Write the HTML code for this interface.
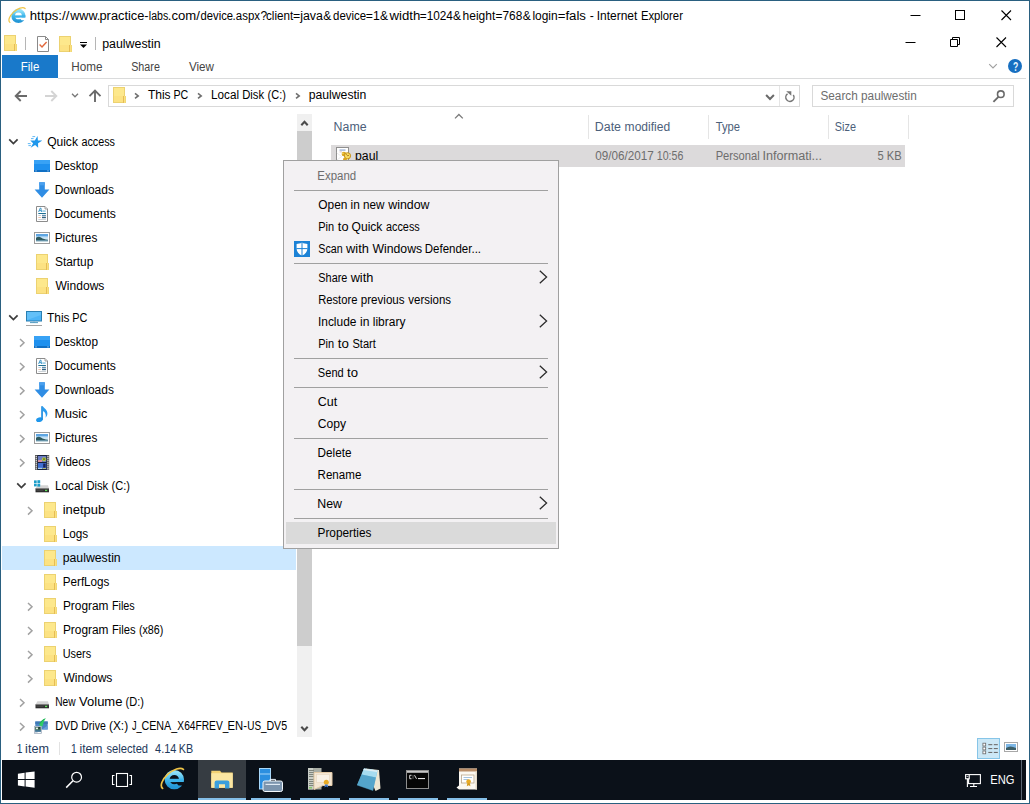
<!DOCTYPE html>
<html lang="en"><head><meta charset="utf-8"><title>paulwestin - File Explorer</title>
<style>
html,body{margin:0;padding:0;}
body{width:1030px;height:804px;overflow:hidden;background:#fff;font-family:"Liberation Sans", sans-serif;font-size:12px;position:relative;}
#root{position:absolute;left:0;top:0;width:1030px;height:804px;overflow:hidden;background:#fff;}
.r{position:absolute;display:block;}
.t{position:absolute;white-space:pre;line-height:16px;height:16px;font-size:12px;transform-origin:0 0;}
.s{display:inline-block;white-space:pre;transform-origin:0 0;height:16px;vertical-align:top;}
</style></head><body><div id="root">
<div class="r" style="left:0px;top:0px;width:1030px;height:804px;background:#2a6080;"></div>
<div class="r" style="left:1px;top:1px;width:1028px;height:802px;background:#fff;"></div>
<span class="t" style="left:30px;top:8.00px;color:#000;"><span id="t0" class="s" style="width:39.50px;transform:translateX(-0.20px) scaleX(1.0963);">https://</span><span id="t1" class="s" style="width:30.00px;transform:translateX(0.25px) scaleX(1.0463);">www.</span><span id="t2" class="s" style="width:49.10px;transform:translateX(-0.50px) scaleX(1.0670);">practice-</span><span id="t3" class="s" style="width:19.40px;transform:translateX(-0.15px) scaleX(0.8812);">labs</span><span id="t4" class="s" style="width:32.10px;transform:translateX(-0.25px) scaleX(1.0939);">.com/</span><span id="t5" class="s" style="width:32.50px;transform:translateX(0.60px) scaleX(0.9369);">device</span><span id="t6" class="s" style="width:27.40px;transform:translateX(-0.40px) scaleX(0.9551);">.aspx</span><span id="t7" class="s" style="width:5.50px;transform:translateX(0.50px) scaleX(1.0000);">?</span><span id="t8" class="s" style="width:27.20px;transform:translateX(1.00px) scaleX(0.9709);">client</span><span id="t9" class="s" style="width:29.90px;transform:translateX(-0.05px) scaleX(1.0299);">=java</span><span id="t10" class="s" style="width:10.00px;transform:translateX(0.60px) scaleX(1.0000);">&amp;</span><span id="t11" class="s" style="width:33.00px;transform:translateX(0.10px) scaleX(0.9514);">device</span><span id="t12" class="s" style="width:13.90px;transform:translateX(-0.15px) scaleX(1.0155);">=1</span><span id="t13" class="s" style="width:9.20px;transform:translateX(0.50px) scaleX(1.0000);">&amp;</span><span id="t14" class="s" style="width:30.80px;transform:translateX(0.45px) scaleX(1.0994);">width</span><span id="t15" class="s" style="width:33.10px;transform:translateX(0.75px) scaleX(0.9821);">=1024</span><span id="t16" class="s" style="width:10.00px;transform:translateX(0.60px) scaleX(1.0000);">&amp;</span><span id="t17" class="s" style="width:32.70px;transform:translateX(-0.40px) scaleX(0.9999);">height</span><span id="t18" class="s" style="width:26.70px;transform:translateX(0.55px) scaleX(0.9877);">=768</span><span id="t19" class="s" style="width:10.20px;transform:translateX(0.75px) scaleX(1.0000);">&amp;</span><span id="t20" class="s" style="width:25.20px;transform:translateX(0.45px) scaleX(0.9937);">login</span><span id="t21" class="s" style="width:32.00px;transform:translateX(0.65px) scaleX(1.1029);">=fals </span><span id="t22" class="s" style="width:7.50px;transform:translateX(0.65px) scaleX(1.0213);">- </span><span id="t23" class="s" style="width:44.00px;transform:translateX(-0.35px) scaleX(0.9993);">Internet </span><span id="t24" class="s" style="transform:translateX(-0.10px) scaleX(0.9395);">Explorer</span></span>
<svg class="r" style="left:7.5px;top:5.5px" width="19" height="19" viewBox="0 0 26 26"><defs><linearGradient id="g1" x1="0" y1="0" x2="0" y2="1"><stop offset="0" stop-color="#8fe0f8"/><stop offset="0.55" stop-color="#3db4ea"/><stop offset="1" stop-color="#2497d6"/></linearGradient></defs><circle cx="14.3" cy="13.6" r="7.200" fill="none" stroke="url(#g1)" stroke-width="5"/><rect x="9" y="12.800" width="14.600" height="3.300" fill="#3db4ea"/><path d="M15.500 16.100h10v3.300h-7z" fill="#fff"/><path d="M2.600 22.400A13.500 6.600 -40 0 1 23.400 3.400" fill="none" stroke="#f0c548" stroke-width="1.700" stroke-linecap="round"/></svg>
<svg class="r" style="left:905px;top:5px" width="110" height="22" viewBox="0 0 110 22"><path d="M5.5 10.5h10" stroke="#000" stroke-width="1" fill="none"/><rect x="50.5" y="5.5" width="9" height="9" stroke="#000" stroke-width="1" fill="none"/><path d="M96.500 5.500l9.500 9.500M106 5.500l-9.500 9.500" stroke="#000" stroke-width="1.100" fill="none"/></svg>
<svg class="r" style="left:2px;top:35px" width="16" height="16" viewBox="0 0 16 16"><rect x="2" y="0" width="12" height="16" fill="#fde88c"/><rect x="2.5" y="0.5" width="11" height="15" fill="none" stroke="#ecd271" stroke-width="1"/><rect x="3" y="9" width="10" height="6" fill="#fce283" /><rect x="12" y="9" width="3" height="7" fill="#fbe080"/><rect x="12" y="9" width="1" height="7" fill="#e6bd55"/><rect x="14.4" y="9" width="0.6" height="7" fill="#ecd271"/></svg>
<div class="r" style="left:25px;top:37px;width:1px;height:13px;background:#b5b5b5;"></div>
<svg class="r" style="left:36px;top:36px" width="14" height="16" viewBox="0 0 14 16"><path d="M1.5 0.5h8l3 3v12h-11z" fill="#fff" stroke="#8a8a8a" stroke-width="1"/><path d="M9.5 0.5v3h3" fill="none" stroke="#8a8a8a" stroke-width="1"/><path d="M3.6 8.6l2.4 2.4 4.6-5" fill="none" stroke="#e2683c" stroke-width="1.4"/></svg>
<svg class="r" style="left:57px;top:36px" width="16" height="16" viewBox="0 0 16 16"><rect x="2" y="0" width="12" height="16" fill="#fde88c"/><rect x="2.5" y="0.5" width="11" height="15" fill="none" stroke="#ecd271" stroke-width="1"/><rect x="3" y="9" width="10" height="6" fill="#fce283" /><rect x="12" y="9" width="3" height="7" fill="#fbe080"/><rect x="12" y="9" width="1" height="7" fill="#e6bd55"/><rect x="14.4" y="9" width="0.6" height="7" fill="#ecd271"/></svg>
<svg class="r" style="left:79px;top:41px" width="10" height="8" viewBox="0 0 10 8"><rect x="1" y="1" width="7" height="1" fill="#000"/><path d="M1 3.6h7l-3.500 3.5z" fill="#000"/></svg>
<div class="r" style="left:95px;top:37px;width:1px;height:13px;background:#b5b5b5;"></div>
<span id="t25" class="t" style="left:102px;top:36.00px;color:#000;transform:translateX(0.20px) scaleX(1.0315);">paulwestin</span>
<svg class="r" style="left:900px;top:32px" width="110" height="22" viewBox="0 0 110 22"><path d="M5.5 10.5h10" stroke="#000" stroke-width="1" fill="none"/><path d="M50.5 7.5h7v7h-7z M52.500 7.5v-2h7v7h-2" stroke="#000" stroke-width="1" fill="none"/><path d="M96.500 5.500l9.500 9.500M106 5.500l-9.500 9.500" stroke="#000" stroke-width="1.100" fill="none"/></svg>
<div class="r" style="left:2px;top:55px;width:56px;height:23px;background:#1979ca;"></div>
<span id="t26" class="t" style="left:20px;top:59.00px;color:#fff;transform:translateX(0.80px) scaleX(0.9557);">File</span>
<span id="t27" class="t" style="left:71px;top:59.00px;color:#444;transform:translateX(0.20px) scaleX(0.9756);">Home</span>
<span id="t28" class="t" style="left:131px;top:59.00px;color:#444;transform:translateX(0.20px) scaleX(0.8952);">Share</span>
<span id="t29" class="t" style="left:188px;top:59.00px;color:#444;transform:translateX(0.95px) scaleX(0.9709);">View</span>
<div class="r" style="left:58px;top:78px;width:968px;height:1px;background:#dadbdc;"></div>
<svg class="r" style="left:988px;top:62px" width="12" height="8" viewBox="0 0 12 8"><path d="M1.200 2.200l3.800 3.800 3.800-3.800" fill="none" stroke="#a0a0a0" stroke-width="1.150"/></svg>
<svg class="r" style="left:1007px;top:58px" width="16" height="16" viewBox="0 0 16 16"><circle cx="8" cy="8" r="7" fill="#176fc1"/></svg>
<span class="t" style="left:1012.700px;top:58.500px;color:#eaf6ff;font-weight:bold;transform:scaleX(0.720);">?</span>
<svg class="r" style="left:14px;top:90px" width="14" height="12" viewBox="0 0 14 12"><path d="M13 6H2.200M6.700 1L1.700 6l5 5" fill="none" stroke="#6a6a6a" stroke-width="1.900"/></svg>
<svg class="r" style="left:44px;top:90px" width="14" height="12" viewBox="0 0 14 12"><path d="M1 6h10.800M7.300 1l5 5-5 5" fill="none" stroke="#d4d4d4" stroke-width="1.900"/></svg>
<svg class="r" style="left:71px;top:93px" width="8" height="5" viewBox="0 0 8 5"><path d="M1 0.800l3 3 3-3" fill="none" stroke="#777" stroke-width="1.300"/></svg>
<svg class="r" style="left:88px;top:89px" width="14" height="14" viewBox="0 0 14 14"><path d="M7 13V2.200M1.500 7.200l5.500-5.500 5.500 5.500" fill="none" stroke="#6a6a6a" stroke-width="1.900"/></svg>
<div class="r" style="left:108px;top:85px;width:692px;height:22px;background:#d9d9d9;"></div>
<div class="r" style="left:109px;top:86px;width:690px;height:20px;background:#fff;"></div>
<svg class="r" style="left:111px;top:87px" width="16" height="16" viewBox="0 0 16 16"><rect x="2" y="0" width="12" height="16" fill="#fde88c"/><rect x="2.5" y="0.5" width="11" height="15" fill="none" stroke="#ecd271" stroke-width="1"/><rect x="3" y="9" width="10" height="6" fill="#fce283" /><rect x="12" y="9" width="3" height="7" fill="#fbe080"/><rect x="12" y="9" width="1" height="7" fill="#e6bd55"/><rect x="14.4" y="9" width="0.6" height="7" fill="#ecd271"/></svg>
<svg class="r" style="left:133.8px;top:91.5px" width="6" height="8" viewBox="0 0 6 8"><path d="M1 1.400l3.200 2.500-3.200 2.500" fill="none" stroke="#6e6e6e" stroke-width="1.600"/></svg>
<span class="t" style="left:148px;top:87.00px;color:#000;"><span id="t30" class="s" style="width:26.10px;transform:translateX(-0.10px) scaleX(1.0032);">This </span><span id="t31" class="s" style="transform:translateX(-0.60px) scaleX(0.8855);">PC</span></span>
<svg class="r" style="left:196.7px;top:91.5px" width="6" height="8" viewBox="0 0 6 8"><path d="M1 1.400l3.200 2.500-3.200 2.500" fill="none" stroke="#6e6e6e" stroke-width="1.600"/></svg>
<span class="t" style="left:211px;top:87.00px;color:#000;"><span id="t32" class="s" style="width:31.20px;transform:translateX(0.05px) scaleX(0.9740);">Local </span><span id="t33" class="s" style="width:25.10px;transform:translateX(0.20px) scaleX(0.9411);">Disk </span><span id="t34" class="s" style="transform:translateX(0.55px) scaleX(0.9165);">(C:)</span></span>
<svg class="r" style="left:295px;top:91.5px" width="6" height="8" viewBox="0 0 6 8"><path d="M1 1.400l3.200 2.500-3.200 2.500" fill="none" stroke="#6e6e6e" stroke-width="1.600"/></svg>
<span id="t35" class="t" style="left:308px;top:87.00px;color:#000;transform:translateX(0.70px) scaleX(1.0171);">paulwestin</span>
<svg class="r" style="left:765px;top:93px" width="11" height="8" viewBox="0 0 11 8"><path d="M1.100 2l3.900 4 3.900-4" fill="none" stroke="#6a6a6a" stroke-width="2"/></svg>
<div class="r" style="left:779px;top:86px;width:1px;height:20px;background:#e5e5e5;"></div>
<svg class="r" style="left:783px;top:90px" width="14" height="14" viewBox="0 0 14 14"><path d="M4.550 3.940A4.100 4.100 0 1 0 10.260 4.950" fill="none" stroke="#777" stroke-width="1.500"/><path d="M3.200 1.300H8.300V5.800z" fill="#777"/></svg>
<div class="r" style="left:812px;top:85px;width:202px;height:22px;background:#d9d9d9;"></div>
<div class="r" style="left:813px;top:86px;width:200px;height:20px;background:#fff;"></div>
<span id="t36" class="t" style="left:820px;top:88.00px;color:#6d6d6d;transform:translateX(0.45px) scaleX(0.9819);">Search paulwestin</span>
<svg class="r" style="left:992px;top:89px" width="14" height="14" viewBox="0 0 14 14"><circle cx="8.800" cy="5.200" r="3.300" fill="none" stroke="#6a6a6a" stroke-width="1.600"/><path d="M6.400 7.800L1.400 12.800" stroke="#6a6a6a" stroke-width="1.900"/></svg>
<div class="r" style="left:2px;top:546px;width:294px;height:24px;background:#cce8ff;"></div>
<svg class="r" style="left:8.3px;top:138px" width="11" height="8" viewBox="0 0 11 8"><path d="M1.200 1.400l4.200 4.200 4.200-4.200" fill="none" stroke="#3c3c3c" stroke-width="1.700"/></svg>
<svg class="r" style="left:26px;top:134px" width="16" height="16" viewBox="0 0 16 16"><polygon points="11.53,2.10 11.90,6.40 16.42,6.52 12.06,9.30 12.16,13.68 9.10,11.10 4.64,13.68 7.11,9.30 4.25,6.52 8.84,6.40" fill="#1f97ec"/><path d="M6.400 2.600h2.800M5 4.600h2.600M1.800 9.600h2.800M2.400 11.600h2.600" stroke="#4fb0f4" stroke-width="0.900" fill="none"/></svg>
<span class="t" style="left:47px;top:134.00px;color:#000;"><span id="t37" class="s" style="width:34.10px;transform:translateX(0.15px) scaleX(1.0025);">Quick </span><span id="t38" class="s" style="transform:translateX(0.40px) scaleX(0.8999);">access</span></span>
<svg class="r" style="left:34px;top:158px" width="16" height="16" viewBox="0 0 16 16"><rect x="0" y="2" width="16" height="12" fill="#1e90ee"/><rect x="0" y="2" width="16" height="4" fill="#38a2f5"/><rect x="0" y="12" width="16" height="2" fill="#0f6fc4"/><rect x="1.5" y="12.4" width="1" height="1" fill="#cfe8ff"/><rect x="13.5" y="12.4" width="1" height="1" fill="#cfe8ff"/></svg>
<span id="t39" class="t" style="left:54px;top:158.00px;color:#000;transform:translateX(0.70px) scaleX(0.9825);">Desktop</span>
<svg class="r" style="left:34px;top:182px" width="16" height="16" viewBox="0 0 16 16"><path d="M5.2 0.3h5.6v7.2h4.6L8 15.8 0.6 7.5h4.6z" fill="#2f8de4"/><path d="M5.2 0.3h5.6v3H5.2z" fill="#4aa0ee"/></svg>
<span id="t40" class="t" style="left:54px;top:182.00px;color:#000;transform:translateX(0.70px) scaleX(0.9973);">Downloads</span>
<svg class="r" style="left:34px;top:206px" width="16" height="16" viewBox="0 0 16 16"><path d="M2.500 0.500h8.500l2.500 2.500v12.500h-11z" fill="#fff" stroke="#8c8c8c" stroke-width="1"/><path d="M11 0.500v2.500h2.500" fill="#f2f2f2" stroke="#8c8c8c" stroke-width="0.800"/><path d="M4.600 6l1.700-4 0.600 0 0.600 4M5.200 4.600h2" fill="none" stroke="#2f8fc4" stroke-width="0.900"/><rect x="8.300" y="4.600" width="3.400" height="0.900" fill="#3f9fcf"/><rect x="4.300" y="7" width="7.600" height="1" fill="#1f6f93"/><rect x="4.300" y="9" width="2.800" height="0.900" fill="#b9c7d1"/><rect x="8" y="8.800" width="3.900" height="1.200" fill="#5f8fb0"/><rect x="4.300" y="11" width="2.800" height="0.900" fill="#e7b9a1"/><rect x="8" y="10.700" width="3.900" height="1.500" fill="#2f5f7f"/><rect x="4.300" y="13" width="7.600" height="0.900" fill="#c4cbd1"/></svg>
<span id="t41" class="t" style="left:54px;top:206.00px;color:#000;transform:translateX(0.45px) scaleX(1.0126);">Documents</span>
<svg class="r" style="left:34px;top:230px" width="16" height="16" viewBox="0 0 16 16"><rect x="0.500" y="2.500" width="15" height="11" fill="#fff" stroke="#9c9c9c" stroke-width="1"/><rect x="2" y="4" width="12" height="8" fill="#cfe6f6"/><rect x="2" y="4" width="12" height="2.200" fill="#5fa6e2"/><rect x="2" y="6" width="12" height="1.200" fill="#9ccbf0"/><path d="M2 7.800c2-1.200 3.600-1.200 5-0.200c2 1.400 4 2 7 2.200v0.600h-12z" fill="#2f5a5e"/><path d="M2 10.200h12v1.800h-12z" fill="#5f8fa6"/><path d="M2 11.200h12v0.800h-12z" fill="#d9e6ec"/></svg>
<span id="t42" class="t" style="left:54px;top:230.00px;color:#000;transform:translateX(0.70px) scaleX(0.9822);">Pictures</span>
<svg class="r" style="left:34px;top:254px" width="16" height="16" viewBox="0 0 16 16"><rect x="2" y="0" width="12" height="16" fill="#fde88c"/><rect x="2.5" y="0.5" width="11" height="15" fill="none" stroke="#ecd271" stroke-width="1"/><rect x="3" y="9" width="10" height="6" fill="#fce283" /><rect x="12" y="9" width="3" height="7" fill="#fbe080"/><rect x="12" y="9" width="1" height="7" fill="#e6bd55"/><rect x="14.4" y="9" width="0.6" height="7" fill="#ecd271"/></svg>
<span id="t43" class="t" style="left:54px;top:254.00px;color:#000;transform:translateX(0.95px) scaleX(0.9934);">Startup</span>
<svg class="r" style="left:34px;top:278px" width="16" height="16" viewBox="0 0 16 16"><rect x="2" y="0" width="12" height="16" fill="#fde88c"/><rect x="2.5" y="0.5" width="11" height="15" fill="none" stroke="#ecd271" stroke-width="1"/><rect x="3" y="9" width="10" height="6" fill="#fce283" /><rect x="12" y="9" width="3" height="7" fill="#fbe080"/><rect x="12" y="9" width="1" height="7" fill="#e6bd55"/><rect x="14.4" y="9" width="0.6" height="7" fill="#ecd271"/></svg>
<span id="t44" class="t" style="left:55px;top:278.00px;color:#000;transform:translateX(0.45px) scaleX(1.0052);">Windows</span>
<svg class="r" style="left:8.3px;top:314px" width="11" height="8" viewBox="0 0 11 8"><path d="M1.200 1.400l4.200 4.200 4.200-4.200" fill="none" stroke="#3c3c3c" stroke-width="1.700"/></svg>
<svg class="r" style="left:26px;top:310px" width="16" height="16" viewBox="0 0 16 16"><rect x="0.500" y="1.500" width="15" height="9.500" fill="#4db4f6" stroke="#2a7fb2" stroke-width="1"/><path d="M1 2h14v3l-14 5z" fill="#6cc4fa" opacity="0.700"/><rect x="7" y="11.500" width="2" height="0.800" fill="#7fb4d4"/><rect x="4" y="12.200" width="8" height="0.900" fill="#3f8fba"/><rect x="0" y="15" width="16" height="0.900" fill="#9a9a9a"/></svg>
<span class="t" style="left:47px;top:310.00px;color:#000;"><span id="t45" class="s" style="width:25.70px;transform:translateX(0.05px) scaleX(0.9879);">This </span><span id="t46" class="s" style="transform:translateX(-0.80px) scaleX(0.9085);">PC</span></span>
<svg class="r" style="left:18.5px;top:337.7px" width="7" height="10" viewBox="0 0 7 10"><path d="M1 1l4 3.800-4 3.800" fill="none" stroke="#a2a2a2" stroke-width="1.500"/></svg>
<svg class="r" style="left:34px;top:334px" width="16" height="16" viewBox="0 0 16 16"><rect x="0" y="2" width="16" height="12" fill="#1e90ee"/><rect x="0" y="2" width="16" height="4" fill="#38a2f5"/><rect x="0" y="12" width="16" height="2" fill="#0f6fc4"/><rect x="1.5" y="12.4" width="1" height="1" fill="#cfe8ff"/><rect x="13.5" y="12.4" width="1" height="1" fill="#cfe8ff"/></svg>
<span id="t47" class="t" style="left:54px;top:334.00px;color:#000;transform:translateX(0.70px) scaleX(0.9825);">Desktop</span>
<svg class="r" style="left:18.5px;top:361.7px" width="7" height="10" viewBox="0 0 7 10"><path d="M1 1l4 3.800-4 3.800" fill="none" stroke="#a2a2a2" stroke-width="1.500"/></svg>
<svg class="r" style="left:34px;top:358px" width="16" height="16" viewBox="0 0 16 16"><path d="M2.500 0.500h8.500l2.500 2.500v12.500h-11z" fill="#fff" stroke="#8c8c8c" stroke-width="1"/><path d="M11 0.500v2.500h2.500" fill="#f2f2f2" stroke="#8c8c8c" stroke-width="0.800"/><path d="M4.600 6l1.700-4 0.600 0 0.600 4M5.200 4.600h2" fill="none" stroke="#2f8fc4" stroke-width="0.900"/><rect x="8.300" y="4.600" width="3.400" height="0.900" fill="#3f9fcf"/><rect x="4.300" y="7" width="7.600" height="1" fill="#1f6f93"/><rect x="4.300" y="9" width="2.800" height="0.900" fill="#b9c7d1"/><rect x="8" y="8.800" width="3.900" height="1.200" fill="#5f8fb0"/><rect x="4.300" y="11" width="2.800" height="0.900" fill="#e7b9a1"/><rect x="8" y="10.700" width="3.900" height="1.500" fill="#2f5f7f"/><rect x="4.300" y="13" width="7.600" height="0.900" fill="#c4cbd1"/></svg>
<span id="t48" class="t" style="left:54px;top:358.00px;color:#000;transform:translateX(0.45px) scaleX(1.0126);">Documents</span>
<svg class="r" style="left:18.5px;top:385.7px" width="7" height="10" viewBox="0 0 7 10"><path d="M1 1l4 3.800-4 3.800" fill="none" stroke="#a2a2a2" stroke-width="1.500"/></svg>
<svg class="r" style="left:34px;top:382px" width="16" height="16" viewBox="0 0 16 16"><path d="M5.2 0.3h5.6v7.2h4.6L8 15.8 0.6 7.5h4.6z" fill="#2f8de4"/><path d="M5.2 0.3h5.6v3H5.2z" fill="#4aa0ee"/></svg>
<span id="t49" class="t" style="left:54px;top:382.00px;color:#000;transform:translateX(0.70px) scaleX(0.9973);">Downloads</span>
<svg class="r" style="left:18.5px;top:409.7px" width="7" height="10" viewBox="0 0 7 10"><path d="M1 1l4 3.800-4 3.800" fill="none" stroke="#a2a2a2" stroke-width="1.500"/></svg>
<svg class="r" style="left:34px;top:406px" width="16" height="16" viewBox="0 0 16 16"><ellipse cx="5.4" cy="13.7" rx="3.4" ry="2.4" fill="#1f97ec" transform="rotate(-15 5.4 13.7)"/><rect x="7.2" y="0.2" width="1.7" height="13.6" fill="#1f8de0"/><path d="M8.8 0.2C10 2.6 13.700 3.600 13.400 7.800C13.300 9.400 12.500 10.700 11.600 11.700C12.400 8.600 11.400 6.200 8.800 5z" fill="#2a9cf0"/></svg>
<span id="t50" class="t" style="left:54px;top:406.00px;color:#000;transform:translateX(0.45px) scaleX(1.0496);">Music</span>
<svg class="r" style="left:18.5px;top:433.7px" width="7" height="10" viewBox="0 0 7 10"><path d="M1 1l4 3.800-4 3.800" fill="none" stroke="#a2a2a2" stroke-width="1.500"/></svg>
<svg class="r" style="left:34px;top:430px" width="16" height="16" viewBox="0 0 16 16"><rect x="0.500" y="2.500" width="15" height="11" fill="#fff" stroke="#9c9c9c" stroke-width="1"/><rect x="2" y="4" width="12" height="8" fill="#cfe6f6"/><rect x="2" y="4" width="12" height="2.200" fill="#5fa6e2"/><rect x="2" y="6" width="12" height="1.200" fill="#9ccbf0"/><path d="M2 7.800c2-1.200 3.600-1.200 5-0.200c2 1.400 4 2 7 2.200v0.600h-12z" fill="#2f5a5e"/><path d="M2 10.200h12v1.800h-12z" fill="#5f8fa6"/><path d="M2 11.200h12v0.800h-12z" fill="#d9e6ec"/></svg>
<span id="t51" class="t" style="left:54px;top:430.00px;color:#000;transform:translateX(0.70px) scaleX(0.9822);">Pictures</span>
<svg class="r" style="left:18.5px;top:457.7px" width="7" height="10" viewBox="0 0 7 10"><path d="M1 1l4 3.800-4 3.800" fill="none" stroke="#a2a2a2" stroke-width="1.500"/></svg>
<svg class="r" style="left:34px;top:454px" width="16" height="16" viewBox="0 0 16 16"><rect x="1" y="1" width="14.200" height="15" fill="#5a5a5a"/><rect x="3.400" y="1" width="9.400" height="15" fill="#18223c"/><rect x="4" y="2" width="8.200" height="6" fill="#6a7cc4"/><rect x="4" y="6" width="4" height="2" fill="#d68fa2"/><circle cx="10" cy="5.300" r="2.100" fill="#b4c43c"/><rect x="9.300" y="4.300" width="1.400" height="1.600" fill="#5a6a1c"/><rect x="4" y="9" width="8.200" height="6" fill="#3f6ed0"/><rect x="9.200" y="9.600" width="2.400" height="4" fill="#1a2258"/><rect x="4" y="13.800" width="4" height="1.200" fill="#a8d0f0"/><rect x="8.600" y="14.200" width="3.400" height="0.800" fill="#d4cc5c"/><rect x="1.700" y="2.10" width="1.100" height="1.100" fill="#fff"/><rect x="13.400" y="2.10" width="1.100" height="1.100" fill="#fff"/><rect x="1.700" y="4.12" width="1.100" height="1.100" fill="#fff"/><rect x="13.400" y="4.12" width="1.100" height="1.100" fill="#fff"/><rect x="1.700" y="6.14" width="1.100" height="1.100" fill="#fff"/><rect x="13.400" y="6.14" width="1.100" height="1.100" fill="#fff"/><rect x="1.700" y="8.16" width="1.100" height="1.100" fill="#fff"/><rect x="13.400" y="8.16" width="1.100" height="1.100" fill="#fff"/><rect x="1.700" y="10.18" width="1.100" height="1.100" fill="#fff"/><rect x="13.400" y="10.18" width="1.100" height="1.100" fill="#fff"/><rect x="1.700" y="12.20" width="1.100" height="1.100" fill="#fff"/><rect x="13.400" y="12.20" width="1.100" height="1.100" fill="#fff"/><rect x="1.700" y="14.22" width="1.100" height="1.100" fill="#fff"/><rect x="13.400" y="14.22" width="1.100" height="1.100" fill="#fff"/></svg>
<span id="t52" class="t" style="left:55px;top:454.00px;color:#000;transform:translateX(0.45px) scaleX(0.9583);">Videos</span>
<svg class="r" style="left:16.3px;top:482px" width="11" height="8" viewBox="0 0 11 8"><path d="M1.200 1.400l4.200 4.200 4.200-4.200" fill="none" stroke="#3c3c3c" stroke-width="1.700"/></svg>
<svg class="r" style="left:34px;top:478px" width="16" height="16" viewBox="0 0 16 16"><path d="M3.400 7.300h10.600l1 3.400H1.500z" fill="#d4d4d4"/><rect x="1.500" y="10.500" width="13.500" height="3.800" fill="#2e2e2e"/><rect x="1.500" y="10.500" width="13.500" height="0.700" fill="#777"/><rect x="2.500" y="12" width="7" height="0.800" fill="#4a4a4a"/><rect x="11" y="11.800" width="2.200" height="1.300" fill="#5fe05a"/><rect x="0" y="2.400" width="2.700" height="2.700" fill="#1c9dc8"/><rect x="3.400" y="2.200" width="2.800" height="2.900" fill="#1c9dc8"/><rect x="0" y="5.700" width="2.700" height="2.700" fill="#1c9dc8"/><rect x="3.400" y="5.700" width="2.800" height="2.900" fill="#1c9dc8"/></svg>
<span class="t" style="left:55px;top:478.00px;color:#000;"><span id="t53" class="s" style="width:31.30px;transform:translateX(-0.00px) scaleX(0.9772);">Local </span><span id="t54" class="s" style="width:24.90px;transform:translateX(0.40px) scaleX(0.9336);">Disk </span><span id="t55" class="s" style="transform:translateX(0.55px) scaleX(0.9230);">(C:)</span></span>
<svg class="r" style="left:26.5px;top:505.7px" width="7" height="10" viewBox="0 0 7 10"><path d="M1 1l4 3.800-4 3.800" fill="none" stroke="#a2a2a2" stroke-width="1.500"/></svg>
<svg class="r" style="left:42px;top:502px" width="16" height="16" viewBox="0 0 16 16"><rect x="2" y="0" width="12" height="16" fill="#fde88c"/><rect x="2.5" y="0.5" width="11" height="15" fill="none" stroke="#ecd271" stroke-width="1"/><rect x="3" y="9" width="10" height="6" fill="#fce283" /><rect x="12" y="9" width="3" height="7" fill="#fbe080"/><rect x="12" y="9" width="1" height="7" fill="#e6bd55"/><rect x="14.4" y="9" width="0.6" height="7" fill="#ecd271"/></svg>
<span id="t56" class="t" style="left:62px;top:502.00px;color:#000;transform:translateX(0.70px) scaleX(1.0780);">inetpub</span>
<svg class="r" style="left:42px;top:526px" width="16" height="16" viewBox="0 0 16 16"><rect x="2" y="0" width="12" height="16" fill="#fde88c"/><rect x="2.5" y="0.5" width="11" height="15" fill="none" stroke="#ecd271" stroke-width="1"/><rect x="3" y="9" width="10" height="6" fill="#fce283" /><rect x="12" y="9" width="3" height="7" fill="#fbe080"/><rect x="12" y="9" width="1" height="7" fill="#e6bd55"/><rect x="14.4" y="9" width="0.6" height="7" fill="#ecd271"/></svg>
<span id="t57" class="t" style="left:62px;top:526.00px;color:#000;transform:translateX(0.70px) scaleX(0.9800);">Logs</span>
<svg class="r" style="left:42px;top:550px" width="16" height="16" viewBox="0 0 16 16"><rect x="2" y="0" width="12" height="16" fill="#fde88c"/><rect x="2.5" y="0.5" width="11" height="15" fill="none" stroke="#ecd271" stroke-width="1"/><rect x="3" y="9" width="10" height="6" fill="#fce283" /><rect x="12" y="9" width="3" height="7" fill="#fbe080"/><rect x="12" y="9" width="1" height="7" fill="#e6bd55"/><rect x="14.4" y="9" width="0.6" height="7" fill="#ecd271"/></svg>
<span id="t58" class="t" style="left:62px;top:550.00px;color:#000;transform:translateX(0.70px) scaleX(1.0225);">paulwestin</span>
<svg class="r" style="left:42px;top:574px" width="16" height="16" viewBox="0 0 16 16"><rect x="2" y="0" width="12" height="16" fill="#fde88c"/><rect x="2.5" y="0.5" width="11" height="15" fill="none" stroke="#ecd271" stroke-width="1"/><rect x="3" y="9" width="10" height="6" fill="#fce283" /><rect x="12" y="9" width="3" height="7" fill="#fbe080"/><rect x="12" y="9" width="1" height="7" fill="#e6bd55"/><rect x="14.4" y="9" width="0.6" height="7" fill="#ecd271"/></svg>
<span id="t59" class="t" style="left:62px;top:574.00px;color:#000;transform:translateX(0.70px) scaleX(0.9734);">PerfLogs</span>
<svg class="r" style="left:26.5px;top:601.7px" width="7" height="10" viewBox="0 0 7 10"><path d="M1 1l4 3.800-4 3.800" fill="none" stroke="#a2a2a2" stroke-width="1.500"/></svg>
<svg class="r" style="left:42px;top:598px" width="16" height="16" viewBox="0 0 16 16"><rect x="2" y="0" width="12" height="16" fill="#fde88c"/><rect x="2.5" y="0.5" width="11" height="15" fill="none" stroke="#ecd271" stroke-width="1"/><rect x="3" y="9" width="10" height="6" fill="#fce283" /><rect x="12" y="9" width="3" height="7" fill="#fbe080"/><rect x="12" y="9" width="1" height="7" fill="#e6bd55"/><rect x="14.4" y="9" width="0.6" height="7" fill="#ecd271"/></svg>
<span class="t" style="left:63px;top:598.00px;color:#000;"><span id="t60" class="s" style="width:48.85px;transform:translateX(-0.10px) scaleX(0.9897);">Program </span><span id="t61" class="s" style="transform:translateX(-0.10px) scaleX(0.9024);">Files</span></span>
<svg class="r" style="left:26.5px;top:625.7px" width="7" height="10" viewBox="0 0 7 10"><path d="M1 1l4 3.800-4 3.800" fill="none" stroke="#a2a2a2" stroke-width="1.500"/></svg>
<svg class="r" style="left:42px;top:622px" width="16" height="16" viewBox="0 0 16 16"><rect x="2" y="0" width="12" height="16" fill="#fde88c"/><rect x="2.5" y="0.5" width="11" height="15" fill="none" stroke="#ecd271" stroke-width="1"/><rect x="3" y="9" width="10" height="6" fill="#fce283" /><rect x="12" y="9" width="3" height="7" fill="#fbe080"/><rect x="12" y="9" width="1" height="7" fill="#e6bd55"/><rect x="14.4" y="9" width="0.6" height="7" fill="#ecd271"/></svg>
<span class="t" style="left:63px;top:622.00px;color:#000;"><span id="t62" class="s" style="width:48.85px;transform:translateX(-0.10px) scaleX(0.9897);">Program </span><span id="t63" class="s" style="width:26.80px;transform:translateX(-0.10px) scaleX(0.9347);">Files </span><span id="t64" class="s" style="transform:translateX(-0.05px) scaleX(0.8924);">(x86)</span></span>
<svg class="r" style="left:26.5px;top:649.7px" width="7" height="10" viewBox="0 0 7 10"><path d="M1 1l4 3.800-4 3.800" fill="none" stroke="#a2a2a2" stroke-width="1.500"/></svg>
<svg class="r" style="left:42px;top:646px" width="16" height="16" viewBox="0 0 16 16"><rect x="2" y="0" width="12" height="16" fill="#fde88c"/><rect x="2.5" y="0.5" width="11" height="15" fill="none" stroke="#ecd271" stroke-width="1"/><rect x="3" y="9" width="10" height="6" fill="#fce283" /><rect x="12" y="9" width="3" height="7" fill="#fbe080"/><rect x="12" y="9" width="1" height="7" fill="#e6bd55"/><rect x="14.4" y="9" width="0.6" height="7" fill="#ecd271"/></svg>
<span id="t65" class="t" style="left:62px;top:646.00px;color:#000;transform:translateX(0.70px) scaleX(0.9091);">Users</span>
<svg class="r" style="left:26.5px;top:673.7px" width="7" height="10" viewBox="0 0 7 10"><path d="M1 1l4 3.800-4 3.800" fill="none" stroke="#a2a2a2" stroke-width="1.500"/></svg>
<svg class="r" style="left:42px;top:670px" width="16" height="16" viewBox="0 0 16 16"><rect x="2" y="0" width="12" height="16" fill="#fde88c"/><rect x="2.5" y="0.5" width="11" height="15" fill="none" stroke="#ecd271" stroke-width="1"/><rect x="3" y="9" width="10" height="6" fill="#fce283" /><rect x="12" y="9" width="3" height="7" fill="#fbe080"/><rect x="12" y="9" width="1" height="7" fill="#e6bd55"/><rect x="14.4" y="9" width="0.6" height="7" fill="#ecd271"/></svg>
<span id="t66" class="t" style="left:63px;top:670.00px;color:#000;transform:translateX(0.45px) scaleX(1.0052);">Windows</span>
<svg class="r" style="left:18.5px;top:697.7px" width="7" height="10" viewBox="0 0 7 10"><path d="M1 1l4 3.800-4 3.800" fill="none" stroke="#a2a2a2" stroke-width="1.500"/></svg>
<svg class="r" style="left:34px;top:694px" width="16" height="16" viewBox="0 0 16 16"><path d="M3.400 7.300h10.600l1 3.400H1.500z" fill="#d4d4d4"/><rect x="1.500" y="10.500" width="13.500" height="3.800" fill="#2e2e2e"/><rect x="1.500" y="10.500" width="13.500" height="0.700" fill="#777"/><rect x="2.500" y="12" width="7" height="0.800" fill="#4a4a4a"/><rect x="11" y="11.800" width="2.200" height="1.300" fill="#5fe05a"/></svg>
<span class="t" style="left:55px;top:694.00px;color:#000;"><span id="t67" class="s" style="width:23.20px;transform:translateX(0.25px) scaleX(0.8485);">New </span><span id="t68" class="s" style="width:47.00px;transform:translateX(1.05px) scaleX(1.0840);">Volume </span><span id="t69" class="s" style="transform:translateX(0.55px) scaleX(0.9176);">(D:)</span></span>
<svg class="r" style="left:18.5px;top:721.7px" width="7" height="10" viewBox="0 0 7 10"><path d="M1 1l4 3.800-4 3.800" fill="none" stroke="#a2a2a2" stroke-width="1.500"/></svg>
<svg class="r" style="left:34px;top:718px" width="16" height="16" viewBox="0 0 16 16"><rect x="1.300" y="3.500" width="12.400" height="8" fill="#4a86c6"/><rect x="1.300" y="3.500" width="12.400" height="2.500" fill="#3f78b4"/><path d="M8 11.500l5.700-4v4z" fill="#6aa0dc"/><path d="M5.200 6.800C6.500 3.500 8.200 1.200 11.800 0.200L10.400 2.400C9.600 4.400 9 6 8.600 8.200L6.800 9z" fill="#2ecf68"/><path d="M5.200 6.800C6.500 3.500 8.200 1.200 11.800 0.200L9 2.600z" fill="#1fa850"/><rect x="0.400" y="8.200" width="7.200" height="7.400" fill="#c8d2dc" stroke="#9aa8b8" stroke-width="0.600"/><rect x="1.200" y="9" width="5.600" height="4.600" fill="#3f6f5c"/><rect x="2" y="9.600" width="2" height="1.600" fill="#e8f0e8"/><rect x="4.400" y="9.200" width="1.600" height="1.400" fill="#1a3028"/><rect x="1.200" y="12.400" width="5.600" height="1.200" fill="#3f78b4"/><rect x="3.600" y="14" width="3.200" height="0.900" fill="#fff"/></svg>
<span class="t" style="left:56px;top:718.00px;color:#000;"><span id="t70" class="s" style="width:26.00px;transform:translateX(-0.80px) scaleX(0.9068);">DVD </span><span id="t71" class="s" style="width:27.50px;transform:translateX(-0.80px) scaleX(0.8774);">Drive </span><span id="t72" class="s" style="width:22.50px;transform:translateX(-1.05px) scaleX(0.9924);">(X:) </span><span id="t73" class="s" style="width:9.70px;transform:translateX(-0.05px) scaleX(0.7645);">J_</span><span id="t74" class="s" style="width:35.70px;transform:translateX(-0.60px) scaleX(0.8922);">CENA_</span><span id="t75" class="s" style="width:51.00px;transform:translateX(0.35px) scaleX(0.8496);">X64FREV_</span><span id="t76" class="s" style="width:19.40px;transform:translateX(-0.40px) scaleX(0.9385);">EN-</span><span id="t77" class="s" style="width:19.40px;transform:translateX(-0.75px) scaleX(0.8311);">US_</span><span id="t78" class="s" style="transform:translateX(-0.60px) scaleX(0.8866);">DV5</span></span>
<div class="r" style="left:297px;top:114px;width:15px;height:623px;background:#f0f0f0;"></div>
<div class="r" style="left:297px;top:131px;width:15px;height:515px;background:#cdcdcd;"></div>
<svg class="r" style="left:300px;top:120px" width="9" height="7" viewBox="0 0 9 7"><path d="M1.300 5.200l3.200-3.400 3.200 3.400" fill="none" stroke="#4a4a4a" stroke-width="2.100"/></svg>
<svg class="r" style="left:300px;top:725px" width="9" height="7" viewBox="0 0 9 7"><path d="M1.300 1.800l3.200 3.400 3.200-3.400" fill="none" stroke="#4a4a4a" stroke-width="2.100"/></svg>
<span id="t79" class="t" style="left:333px;top:119.00px;color:#4c607a;transform:translateX(0.60px) scaleX(1.0293);">Name</span>
<span class="t" style="left:595px;top:119.00px;color:#4c607a;"><span id="t80" class="s" style="width:29.60px;transform:translateX(-0.20px) scaleX(1.0318);">Date </span><span id="t81" class="s" style="transform:translateX(-0.40px) scaleX(1.0033);">modified</span></span>
<span id="t82" class="t" style="left:715px;top:119.00px;color:#4c607a;transform:translateX(0.75px) scaleX(0.9335);">Type</span>
<span id="t83" class="t" style="left:834px;top:119.00px;color:#4c607a;transform:translateX(0.80px) scaleX(0.9046);">Size</span>
<div class="r" style="left:588px;top:115px;width:1px;height:24px;background:#e5e5e5;"></div>
<div class="r" style="left:708px;top:115px;width:1px;height:24px;background:#e5e5e5;"></div>
<div class="r" style="left:828px;top:115px;width:1px;height:24px;background:#e5e5e5;"></div>
<div class="r" style="left:908px;top:115px;width:1px;height:24px;background:#e5e5e5;"></div>
<svg class="r" style="left:454px;top:113px" width="10" height="7" viewBox="0 0 10 7"><path d="M1 5.400l3.900-3.900 3.900 3.900" fill="none" stroke="#7a7a7a" stroke-width="1.300"/></svg>
<div class="r" style="left:331px;top:145px;width:574px;height:22px;background:#dcdadb;"></div>
<svg class="r" style="left:336px;top:147px" width="16" height="16" viewBox="0 0 16 16"><rect x="0.500" y="0.500" width="12" height="14" fill="#fff" stroke="#8f8f8f"/><rect x="3.500" y="2.600" width="6" height="0.900" fill="#6a8ac0"/><rect x="3.500" y="4.600" width="2.500" height="0.700" fill="#c9a9a0"/><path d="M0.800 6l5 3.500M0.800 13l5-3.500" stroke="#e4e4e4" stroke-width="0.700" fill="none"/><circle cx="7.900" cy="7" r="2.300" fill="#d9a521"/><circle cx="6.900" cy="6.300" r="0.900" fill="#f3d35a"/><circle cx="11.500" cy="8.800" r="3.100" fill="#f7dc62" stroke="#c58f1a" stroke-width="1"/><path d="M10.300 7.200l1.400 1.700 1.300-0.600" fill="none" stroke="#a86a10" stroke-width="0.800"/><circle cx="9" cy="12.500" r="2" fill="#d9a521"/></svg>
<span id="t84" class="t" style="left:355px;top:148.00px;color:#000;transform:translateX(0.05px) scaleX(1.0212);">paul</span>
<span class="t" style="left:595px;top:148.00px;color:#6d6d6d;"><span id="t85" class="s" style="width:61.80px;transform:translateX(0.30px) scaleX(0.9747);">09/06/2017 </span><span id="t86" class="s" style="transform:translateX(-0.20px) scaleX(0.8843);">10:56</span></span>
<span class="t" style="left:716px;top:148.00px;color:#6d6d6d;"><span id="t87" class="s" style="width:47.10px;transform:translateX(-0.35px) scaleX(0.9289);">Personal </span><span id="t88" class="s" style="transform:translateX(-0.60px) scaleX(1.0521);">Informati...</span></span>
<span id="t89" class="t" style="left:877px;top:148.00px;color:#6d6d6d;transform:translateX(0.45px) scaleX(0.9293);">5 KB</span>
<span class="t" style="left:17px;top:741.00px;color:#1e395b;"><span id="t90" class="s" style="width:8.50px;transform:translateX(-0.25px) scaleX(0.8487);">1 </span><span id="t91" class="s" style="transform:translateX(-0.90px) scaleX(1.0517);">item</span></span>
<div class="r" style="left:59px;top:742px;width:1px;height:13px;background:#e2e2e2;"></div>
<span class="t" style="left:71px;top:741.00px;color:#1e395b;"><span id="t92" class="s" style="width:8.60px;transform:translateX(0.10px) scaleX(0.8587);">1 </span><span id="t93" class="s" style="width:26.40px;transform:translateX(-0.50px) scaleX(1.0148);">item </span><span id="t94" class="s" style="transform:translateX(0.40px) scaleX(0.9324);">selected</span></span>
<span class="t" style="left:155px;top:741.00px;color:#1e395b;"><span id="t95" class="s" style="width:24.30px;transform:translateX(0.10px) scaleX(0.9100);">4.14 </span><span id="t96" class="s" style="transform:translateX(-0.30px) scaleX(0.8966);">KB</span></span>
<div class="r" style="left:977px;top:738px;width:23px;height:21px;background:#86c5e8;"></div>
<div class="r" style="left:978px;top:739px;width:21px;height:19px;background:#cce8f6;"></div>
<svg class="r" style="left:982px;top:742px" width="16" height="15" viewBox="0 0 16 15"><rect x="0.900" y="1.2" width="2.800" height="2.800" fill="#fff" stroke="#6a6a6a" stroke-width="0.800"/><rect x="6.300" y="2.1" width="4" height="1.100" fill="#6e6e6e"/><rect x="11.800" y="2.1" width="4" height="1.100" fill="#6e6e6e"/><rect x="0.900" y="5.1" width="2.800" height="2.800" fill="#fff" stroke="#6a6a6a" stroke-width="0.800"/><rect x="6.300" y="6" width="4" height="1.100" fill="#6e6e6e"/><rect x="11.800" y="6" width="4" height="1.100" fill="#6e6e6e"/><rect x="0.900" y="9" width="2.800" height="2.800" fill="#fff" stroke="#6a6a6a" stroke-width="0.800"/><rect x="6.300" y="9.9" width="4" height="1.100" fill="#6e6e6e"/><rect x="11.800" y="9.9" width="4" height="1.100" fill="#6e6e6e"/></svg>
<svg class="r" style="left:1004px;top:742px" width="15" height="11" viewBox="0 0 15 11"><rect x="0.500" y="0.500" width="13" height="9" fill="#fff" stroke="#a8a8a8"/><rect x="2" y="2" width="10" height="6" fill="#7db7e6"/><path d="M2 6q4-3 10 0v2h-10z" fill="#3d5f68"/></svg>
<div class="r" style="left:283px;top:160px;width:276px;height:389px;background:#a0a0a0;"></div>
<div class="r" style="left:284px;top:161px;width:274px;height:387px;background:#f3f1f3;"></div>
<div class="r" style="left:286px;top:522px;width:270px;height:22px;background:#dadada;"></div>
<span id="t97" class="t" style="left:317px;top:168.00px;color:#6d6d6d;transform:translateX(0.30px) scaleX(0.9537);">Expand</span>
<span class="t" style="left:318px;top:197.00px;color:#000;"><span id="t98" class="s" style="width:32.40px;transform:translateX(0.35px) scaleX(0.9907);">Open </span><span id="t99" class="s" style="width:12.50px;transform:translateX(0.55px) scaleX(0.9852);">in </span><span id="t100" class="s" style="width:24.70px;transform:translateX(0.05px) scaleX(0.9740);">new </span><span id="t101" class="s" style="transform:translateX(0.25px) scaleX(1.0324);">window</span></span>
<span class="t" style="left:319px;top:219.00px;color:#000;"><span id="t102" class="s" style="width:18.90px;transform:translateX(-0.80px) scaleX(0.9136);">Pin </span><span id="t103" class="s" style="width:14.20px;transform:translateX(-0.15px) scaleX(1.0642);">to </span><span id="t104" class="s" style="width:34.20px;transform:translateX(-0.45px) scaleX(1.0054);">Quick </span><span id="t105" class="s" style="transform:translateX(0.00px) scaleX(0.9033);">access</span></span>
<span class="t" style="left:318px;top:241.00px;color:#000;"><span id="t106" class="s" style="width:27.40px;transform:translateX(0.35px) scaleX(0.8929);">Scan </span><span id="t107" class="s" style="width:26.40px;transform:translateX(1.05px) scaleX(1.0694);">with </span><span id="t108" class="s" style="width:53.10px;transform:translateX(0.45px) scaleX(1.0208);">Windows </span><span id="t109" class="s" style="transform:translateX(-0.20px) scaleX(0.9579);">Defender...</span></span>
<span class="t" style="left:318px;top:270.00px;color:#000;"><span id="t110" class="s" style="width:32.00px;transform:translateX(0.35px) scaleX(0.9050);">Share </span><span id="t111" class="s" style="transform:translateX(0.65px) scaleX(1.0625);">with</span></span>
<span class="t" style="left:319px;top:292.00px;color:#000;"><span id="t112" class="s" style="width:42.30px;transform:translateX(-0.80px) scaleX(0.9326);">Restore </span><span id="t113" class="s" style="width:47.10px;transform:translateX(-0.25px) scaleX(0.9671);">previous </span><span id="t114" class="s" style="transform:translateX(0.35px) scaleX(0.9540);">versions</span></span>
<span class="t" style="left:319px;top:314.00px;color:#000;"><span id="t115" class="s" style="width:41.80px;transform:translateX(-1.05px) scaleX(0.9945);">Include </span><span id="t116" class="s" style="width:12.80px;transform:translateX(-1.00px) scaleX(1.0089);">in </span><span id="t117" class="s" style="transform:translateX(-1.20px) scaleX(0.9970);">library</span></span>
<span class="t" style="left:319px;top:336.00px;color:#000;"><span id="t118" class="s" style="width:18.90px;transform:translateX(-0.80px) scaleX(0.9136);">Pin </span><span id="t119" class="s" style="width:14.80px;transform:translateX(-0.15px) scaleX(1.1091);">to </span><span id="t120" class="s" style="transform:translateX(-0.60px) scaleX(0.9240);">Start</span></span>
<span class="t" style="left:318px;top:365.00px;color:#000;"><span id="t121" class="s" style="width:28.90px;transform:translateX(-0.15px) scaleX(0.9216);">Send </span><span id="t122" class="s" style="transform:translateX(0.05px) scaleX(1.0951);">to</span></span>
<span id="t123" class="t" style="left:317px;top:394.00px;color:#000;transform:translateX(0.80px) scaleX(1.0390);">Cut</span>
<span id="t124" class="t" style="left:317px;top:416.00px;color:#000;transform:translateX(0.80px) scaleX(1.0074);">Copy</span>
<span id="t125" class="t" style="left:317px;top:445.00px;color:#000;transform:translateX(0.55px) scaleX(0.9761);">Delete</span>
<span id="t126" class="t" style="left:317px;top:467.00px;color:#000;transform:translateX(0.55px) scaleX(0.9651);">Rename</span>
<span id="t127" class="t" style="left:317px;top:496.00px;color:#000;transform:translateX(0.30px) scaleX(1.0302);">New</span>
<span id="t128" class="t" style="left:317px;top:525.00px;color:#000;transform:translateX(0.55px) scaleX(0.9852);">Properties</span>
<div class="r" style="left:294px;top:190px;width:254px;height:1px;background:#a0a0a0;"></div>
<div class="r" style="left:294px;top:263px;width:254px;height:1px;background:#a0a0a0;"></div>
<div class="r" style="left:294px;top:358px;width:254px;height:1px;background:#a0a0a0;"></div>
<div class="r" style="left:294px;top:387px;width:254px;height:1px;background:#a0a0a0;"></div>
<div class="r" style="left:294px;top:438px;width:254px;height:1px;background:#a0a0a0;"></div>
<div class="r" style="left:294px;top:489px;width:254px;height:1px;background:#a0a0a0;"></div>
<div class="r" style="left:294px;top:518px;width:254px;height:1px;background:#a0a0a0;"></div>
<svg class="r" style="left:539px;top:270px" width="9" height="14" viewBox="0 0 9 14"><path d="M0.800 0.800l6.800 6.200-6.800 6.200" fill="none" stroke="#2a2a2a" stroke-width="1.250"/></svg>
<svg class="r" style="left:539px;top:314px" width="9" height="14" viewBox="0 0 9 14"><path d="M0.800 0.800l6.800 6.200-6.800 6.200" fill="none" stroke="#2a2a2a" stroke-width="1.250"/></svg>
<svg class="r" style="left:539px;top:365px" width="9" height="14" viewBox="0 0 9 14"><path d="M0.800 0.800l6.800 6.200-6.800 6.200" fill="none" stroke="#2a2a2a" stroke-width="1.250"/></svg>
<svg class="r" style="left:539px;top:496px" width="9" height="14" viewBox="0 0 9 14"><path d="M0.800 0.800l6.800 6.200-6.800 6.200" fill="none" stroke="#2a2a2a" stroke-width="1.250"/></svg>
<svg class="r" style="left:294px;top:241px" width="16" height="16" viewBox="0 0 16 16"><rect x="0" y="0" width="16" height="16" fill="#1b82d6"/><path d="M8 1.6c1.8 1 3.6 1.4 5.4 1.4v4.4c0 3.4-2.2 5.8-5.4 7.2c-3.2-1.4-5.4-3.8-5.4-7.2V3c1.8 0 3.6-0.4 5.4-1.4z" fill="#fff"/><rect x="7.5" y="1.4" width="1" height="13.4" fill="#1b82d6"/><rect x="2.4" y="7.1" width="11.2" height="1" fill="#1b82d6"/></svg>
<div class="r" style="left:2px;top:760px;width:1024px;height:40px;background:#0b1119;"></div>
<div class="r" style="left:198px;top:760px;width:48px;height:40px;background:#363c42;"></div>
<div class="r" style="left:198px;top:798px;width:48px;height:2px;background:#85bfe8;"></div>
<div class="r" style="left:251px;top:798px;width:40px;height:2px;background:#85bfe8;"></div>
<div class="r" style="left:300px;top:798px;width:40px;height:2px;background:#85bfe8;"></div>
<div class="r" style="left:349px;top:798px;width:40px;height:2px;background:#85bfe8;"></div>
<div class="r" style="left:398px;top:798px;width:40px;height:2px;background:#85bfe8;"></div>
<div class="r" style="left:447px;top:798px;width:40px;height:2px;background:#85bfe8;"></div>
<div class="r" style="left:1021px;top:760px;width:1px;height:40px;background:#5b6672;"></div>
<svg class="r" style="left:17px;top:771px" width="18" height="18" viewBox="0 0 18 18"><path d="M0.900 2.700l6.700-0.900v6.300h-6.700z M8.600 1.600l9-1.200v7.700h-9z M0.900 9.100h6.700v6.300l-6.700-0.900z M8.600 9.100h9v7.700l-9-1.200z" fill="#fff"/></svg>
<svg class="r" style="left:65px;top:771px" width="18" height="18" viewBox="0 0 18 18"><circle cx="11.600" cy="6.200" r="4.900" fill="none" stroke="#fff" stroke-width="1.200"/><path d="M8 9.800L1.200 16.600" stroke="#fff" stroke-width="1.500"/></svg>
<svg class="r" style="left:111px;top:772px" width="22" height="15" viewBox="0 0 22 15"><rect x="5.500" y="1.500" width="11" height="13" fill="none" stroke="#fff" stroke-width="1.100"/><path d="M3.500 3.500h-2v9h2M18.500 3.500h2v9h-2" fill="none" stroke="#fff" stroke-width="1.100"/></svg>
<svg class="r" style="left:160px;top:766px" width="26" height="26" viewBox="0 0 26 26"><defs><linearGradient id="g2" x1="0" y1="0" x2="0" y2="1"><stop offset="0" stop-color="#8fe0f8"/><stop offset="0.55" stop-color="#3db4ea"/><stop offset="1" stop-color="#2497d6"/></linearGradient></defs><circle cx="14.3" cy="13.6" r="7.200" fill="none" stroke="url(#g2)" stroke-width="5"/><rect x="9" y="12.800" width="14.600" height="3.300" fill="#3db4ea"/><path d="M15.500 16.100h10v3.300h-7z" fill="#0b1119"/><path d="M2.600 22.400A13.500 6.600 -40 0 1 23.400 3.400" fill="none" stroke="#f0c548" stroke-width="1.700" stroke-linecap="round"/></svg>
<svg class="r" style="left:211px;top:770px" width="22" height="19" viewBox="0 0 22 19"><path d="M0.300 0.700h8.700l1.500 1.800h11.200v15.300h-21.400z" fill="#f3d173"/><rect x="0.300" y="3.200" width="21.400" height="14.600" fill="#fbe6a2"/><path d="M3.600 18.600v-6a2 2 0 0 1 2-2h10.800a2 2 0 0 1 2 2v6h-4.400v-4.400h-6v4.400z" fill="#3a9fdd"/></svg>
<svg class="r" style="left:258px;top:767px" width="26" height="26" viewBox="0 0 26 26"><rect x="1.500" y="1.500" width="11" height="20.500" fill="#2b8fe0" stroke="#a8d8fa" stroke-width="1"/><rect x="1.500" y="6.500" width="11" height="1" fill="#a8d8fa"/><path d="M12 14v-1.600h5.500v1.600" fill="none" stroke="#e8f2fb" stroke-width="1"/><rect x="5" y="14" width="19.500" height="10.500" rx="1.800" fill="#7b94ad" stroke="#f4f9fd" stroke-width="1"/><rect x="7.500" y="16.800" width="14.500" height="1.200" fill="#dfeaf4"/></svg>
<svg class="r" style="left:307px;top:767px" width="26" height="25" viewBox="0 0 26 25"><rect x="1" y="1" width="13.500" height="21.500" fill="#a9aea6"/><rect x="1" y="1" width="5" height="21.500" fill="#c9cdc6"/><rect x="2" y="3" width="5" height="1" fill="#7f857c"/><rect x="2" y="5" width="5" height="1" fill="#7f857c"/><rect x="2" y="7" width="5" height="1" fill="#7f857c"/><rect x="2" y="9" width="5" height="1" fill="#7f857c"/><rect x="2" y="12" width="5" height="1" fill="#7f857c"/><rect x="2" y="14" width="5" height="1" fill="#7f857c"/><rect x="2" y="16" width="5" height="1" fill="#7f857c"/><rect x="2" y="18" width="5" height="1" fill="#7f857c"/><rect x="2" y="20" width="3" height="1.500" fill="#86c96a"/><path d="M7 5.500h18v13h-9l-9 4z" fill="#f3e6d3" stroke="#e2c9a6" stroke-width="1"/><rect x="9.500" y="7.500" width="13" height="8" fill="#f8f1e6" stroke="#e6d5bd" stroke-width="0.600"/><circle cx="19.300" cy="15.300" r="2.500" fill="#e9ab25"/><path d="M18 17.500l-0.600 3 1.900-1 1.900 1-0.600-3z" fill="#3f78c8"/></svg>
<svg class="r" style="left:356px;top:767px" width="26" height="25" viewBox="0 0 26 25"><path d="M10 1.500l13 1.500 1.500 18.500-5 2.500z" fill="#ece6d2"/><path d="M8 1.500l13.500 2-4.500 20-16-5.500z" fill="#5fb0d2"/><path d="M8 1.500l13.500 2-1.500 7-14.500-3z" fill="#a6dcf0"/><path d="M5.500 7.500l14.500 3-3 13.500-16-5.500z" fill="#4a9cc4" opacity="0.550"/><path d="M8 1.500l13.500 2-0.400 1.600-13.800-2z" fill="#dfeef4"/></svg>
<svg class="r" style="left:406px;top:770px" width="23" height="19" viewBox="0 0 23 19"><rect x="0.500" y="0.500" width="22" height="18" fill="#050505" stroke="#8e8e8e" stroke-width="1"/><rect x="1" y="1" width="21" height="1.800" fill="#c8c8c8"/><path d="M5.500 5.300h-1.800v3.400h1.800M7 5.600v0.800M7 7.600v0.800M8.500 5.200l2 3.600" stroke="#d8d8d8" stroke-width="1" fill="none"/><rect x="12" y="8" width="7" height="1.100" fill="#e6e6e6"/></svg>
<svg class="r" style="left:456px;top:767px" width="22" height="25" viewBox="0 0 22 25"><path d="M3 1.500h18v21h-18l-2.500-2 2.500-2z" fill="#fbf8f2"/><rect x="3" y="1.500" width="18" height="3" fill="#b98d68"/><rect x="19.500" y="4.500" width="1.500" height="18" fill="#e4d9c8"/><rect x="5.500" y="8" width="12.500" height="8" fill="#fff" stroke="#b9a58a" stroke-width="0.800"/><rect x="7.500" y="10" width="8.500" height="0.800" fill="#8fb3d6"/><rect x="7.500" y="12" width="5" height="0.800" fill="#8fb3d6"/><circle cx="12.600" cy="14.600" r="2.300" fill="#e9ab25"/><path d="M11.300 16.300l-0.500 3 1.800-1 1.800 1-0.500-3z" fill="#d49a1c"/></svg>
<svg class="r" style="left:964px;top:773px" width="18" height="15" viewBox="0 0 18 15"><rect x="4.600" y="1.600" width="11.800" height="9" fill="none" stroke="#fff" stroke-width="1.100"/><path d="M9.800 10.600v2.600M6 13.500h7" stroke="#fff" stroke-width="1.100" fill="none"/><rect x="1.600" y="1.600" width="3.600" height="4.200" fill="#0b1119" stroke="#fff" stroke-width="1.100"/><path d="M3.400 5.800v8.200" stroke="#fff" stroke-width="1.100"/><path d="M2.600 3l0.800 0.900 0.800-0.900" stroke="#fff" stroke-width="0.700" fill="none"/></svg>
<span id="t129" class="t" style="left:990px;top:772.00px;color:#fff;transform:translateX(0.35px) scaleX(0.9308);">ENG</span>
</div></body></html>
